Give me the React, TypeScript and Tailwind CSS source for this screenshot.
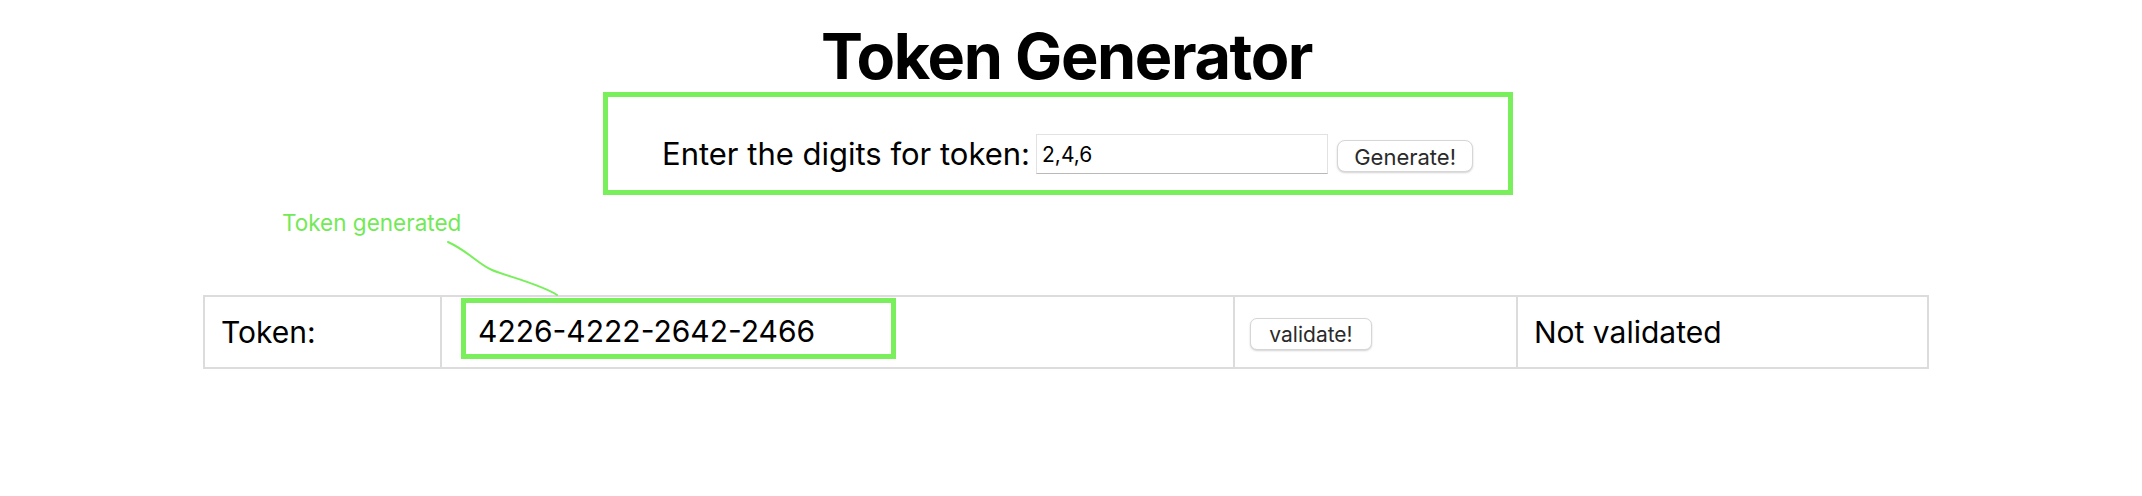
import React from 'react';

const GREEN = 'border-[#79ef5c]';

const TokenRow: React.FC<{ token: string; status: string }> = ({ token, status }) => {
    return (
        <div className="ml-[203px] flex h-[74px] w-[1726px] border-2 border-[#dcdcdc] text-[30px] text-black">
            <div className="flex w-[235px] items-center pl-[16px]">Token:</div>
            <div className="w-[793px] border-l-2 border-[#dcdcdc] pl-[19px] pt-[1px]">
                <div className={`flex h-[61px] w-[435px] items-center border-[5px] ${GREEN} pl-[12px] pt-[5px]`}>
                    {token}
                </div>
            </div>
            <div className="flex w-[283px] items-center border-l-2 border-[#dcdcdc] pl-[15px] pt-[4px]">
                <button className="h-[32px] w-[122px] rounded-[7px] border border-[#d6d6d6] bg-white text-[21px] text-[#2a2a2a] shadow-[0_1px_2px_rgba(0,0,0,0.18)]">
                    validate!
                </button>
            </div>
            <div className="flex flex-1 items-center border-l-2 border-[#dcdcdc] pl-[16px]">{status}</div>
        </div>
    );
};

const App: React.FC = () => {
    return (
        <div
            className="relative h-[496px] w-full overflow-hidden bg-white pt-[25px]"
            style={{ fontFamily: 'Inter, "Noto Sans", sans-serif' }}
        >
            <h1 className="flex h-[63px] justify-center pr-[9px] text-[63px] font-bold leading-none tracking-[-1.4px] text-black">
                Token Generator
            </h1>

            <div className={`ml-[603px] mt-[4px] h-[103px] w-[910px] border-[5px] ${GREEN}`}>
                <div className="flex items-start pl-[54px] pt-[37px]">
                    <label className="text-[31px] leading-[40px] text-black">Enter the digits for token:</label>
                    <input
                        defaultValue="2,4,6"
                        className="ml-[6px] h-[40px] w-[292px] border border-[#e2e2e2] border-b-[#b9b9b9] bg-white pl-[5px] text-[21px] text-black outline-none"
                    />
                    <button className="ml-[9px] mt-[6px] h-[32px] w-[136px] rounded-[8px] border border-[#d6d6d6] bg-white text-[22px] text-[#2a2a2a] shadow-[0_1px_2px_rgba(0,0,0,0.18)]">
                        Generate!
                    </button>
                </div>
            </div>

            <p className="ml-[282px] mt-[14px] text-[22.5px] leading-[28px] text-[#72e956]">Token generated</p>

            <div className="mt-[58px]">
                <TokenRow token="4226-4222-2642-2466" status="Not validated" />
            </div>

            <svg
                className="pointer-events-none absolute left-0 top-0"
                width="2142"
                height="496"
                viewBox="0 0 2142 496"
                fill="none"
            >
                <path
                    d="M448 242 C 468 251, 478 264, 492 270 S 540 284, 557 295"
                    stroke="#79ef5c"
                    strokeWidth="2"
                    strokeLinecap="round"
                />
            </svg>
        </div>
    );
};

export default App;
